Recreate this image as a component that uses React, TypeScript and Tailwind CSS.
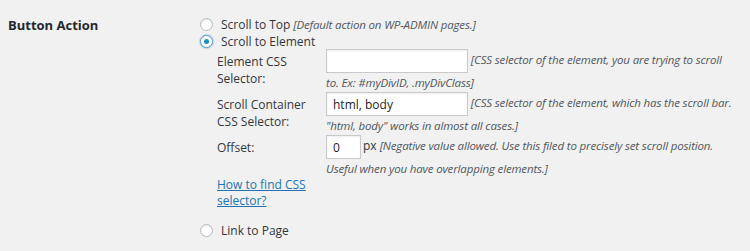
// @ts-nocheck
import React from 'react';

function Radio({ label, checked = false, desc }) {
  return (
    <div className="flex h-[17px] items-center">
      <span
        className={
          checked
            ? 'flex h-[13px] w-[13px] shrink-0 items-center justify-center rounded-full border border-[#5b9dd9] bg-white shadow-[0_0_2px_rgba(30,140,190,0.8)]'
            : 'flex h-[13px] w-[13px] shrink-0 items-center justify-center rounded-full border border-[#b4b9be] bg-white shadow-[inset_0_1px_2px_rgba(0,0,0,0.1)]'
        }
      >
        {checked ? <span className="h-[5px] w-[5px] rounded-full bg-[#1e8cbe]" /> : null}
      </span>
      <span className="ml-[8px] whitespace-nowrap">
        {label}
        {desc ? <span className="text-[11.5px] italic tracking-[-0.15px] text-[#50575e]"> {desc}</span> : null}
      </span>
    </div>
  );
}

function Field({ value = '', width, children }) {
  return (
    <div>
      <input
        readOnly
        value={value}
        className={`${width} my-px h-6 border border-[#c9c9c9] bg-white px-[6px] align-middle text-[12px] text-[#1d2327] shadow-[inset_0_1px_2px_rgba(0,0,0,0.07)] outline-none`}
      />
      {children}
    </div>
  );
}

export default function App() {
  return (
    <div className="h-[251px] w-[750px] bg-[#f1f1f1] font-['Open_Sans',sans-serif] text-[12px] leading-[17px] text-[#32373c]">
      <div className="flex">
        <div className="w-[200px] shrink-0 pl-2 pt-[17px] text-[13px] font-bold text-[#23282d]">Button Action</div>

        <div className="flex-1 pt-[16px] pr-[15px]">
          <Radio label="Scroll to Top" desc="[Default action on WP-ADMIN pages.]" />
          <Radio label="Scroll to Element" checked />

          <div className="-mt-[2px] ml-[17px] grid grid-cols-[109px_1fr]">
            <div className="pt-[5px]">
              Element CSS
              <br />
              Selector:
            </div>
            <Field width="w-[142px]">
              <span className="text-[11.5px] italic tracking-[-0.15px] text-[#50575e]">
                {' '}[CSS selector of the element, you are trying to scroll to. Ex: #myDivID, .myDivClass]
              </span>
            </Field>

            <div className="pt-[5px]">
              Scroll Container
              <br />
              CSS Selector:
            </div>
            <Field width="w-[142px]" value="html, body">
              <span className="text-[11.5px] italic tracking-[-0.15px] text-[#50575e]">
                {' '}[CSS selector of the element, which has the scroll bar. "html, body" works in almost all cases.]
              </span>
            </Field>

            <div className="pt-[5px]">Offset:</div>
            <Field width="w-[35px]" value="0">
              <span className="ml-[2px] mr-[3px]">px</span>
              <span className="text-[11.5px] italic tracking-[-0.15px] text-[#50575e]">
                [Negative value allowed. Use this filed to precisely set scroll position. Useful when you have overlapping elements.]
              </span>
            </Field>

            <div className="leading-[16px]">
              <a href="#" className="text-[#2271b1] underline">
                How to find CSS selector?
              </a>
            </div>
            <div />
          </div>

          <div className="mt-[13px]">
            <Radio label="Link to Page" />
          </div>
        </div>
      </div>
    </div>
  );
}
